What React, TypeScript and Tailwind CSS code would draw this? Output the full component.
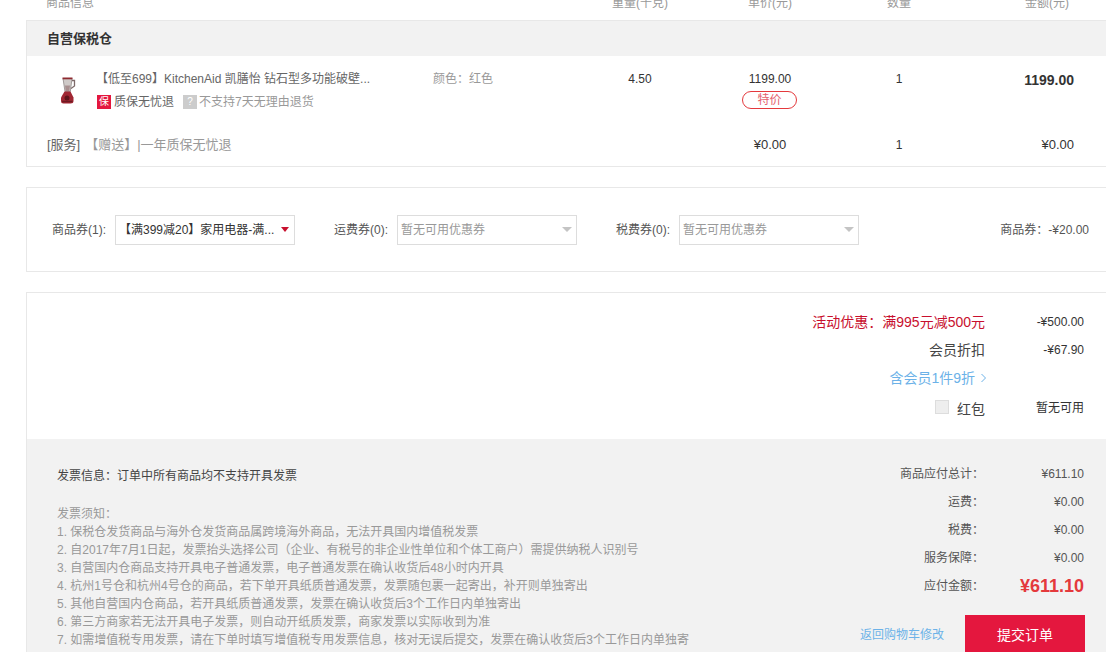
const notes = [
	"1. 保税仓发货商品与海外仓发货商品属跨境海外商品，无法开具国内增值税发票",
	"2. 自2017年7月1日起，发票抬头选择公司（企业、有税号的非企业性单位和个体工商户）需提供纳税人识别号",
	"3. 自营国内仓商品支持开具电子普通发票，电子普通发票在确认收货后48小时内开具",
	"4. 杭州1号仓和杭州4号仓的商品，若下单开具纸质普通发票，发票随包裹一起寄出，补开则单独寄出",
	"5. 其他自营国内仓商品，若开具纸质普通发票，发票在确认收货后3个工作日内单独寄出",
	"6. 第三方商家若无法开具电子发票，则自动开纸质发票，商家发票以实际收到为准",
	"7. 如需增值税专用发票，请在下单时填写增值税专用发票信息，核对无误后提交，发票在确认收货后3个工作日内单独寄",
];

const totals = [
	{ label: "商品应付总计：", value: "¥611.10" },
	{ label: "运费：", value: "¥0.00" },
	{ label: "税费：", value: "¥0.00" },
	{ label: "服务保障：", value: "¥0.00" },
];

function Blender() {
	return (
		<svg width="16" height="28" viewBox="0 0 16 28" className="block">
			<path d="M3 1.500h9l-1.700 13h-5.300z" fill="#cfcac8" stroke="#8f8886" strokeWidth="0.8" />
			<path d="M2.500 0.500h10v1.800h-10z" fill="#8e2a30" />
			<path d="M12 3.500h2.500v5.500l-3.500 2.500" fill="none" stroke="#7d6a6a" strokeWidth="1.300" />
			<path d="M5 8.500h5l-0.700 6h-3.600z" fill="#a88f8f" />
			<path d="M4.500 14.500h6l3 6v3.500q0 2.500-3 2.500h-7q-2.500 0-2.500-2.500v-3.500z" fill="#a12733" />
			<circle cx="7" cy="21" r="2.500" fill="#5f161c" />
			<path d="M2 24.500h10.500" stroke="#6e1a22" strokeWidth="1.500" />
		</svg>
	);
}

function CouponSelect({ text, active }: { text: string; active?: boolean }) {
	return (
		<div className="flex h-[30px] w-[180px] items-center justify-between border border-[#dddddd] pl-[3px] pr-[4px]">
			<span className={active ? "text-[#333333]" : "text-[#999999]"}>{text}</span>
			<span
				className={
					active
						? "mr-px h-0 w-0 border-x-[4.500px] border-t-[5px] border-x-transparent border-t-[#c8102e]"
						: "h-0 w-0 border-x-[5px] border-t-[5px] border-x-transparent border-t-[#c4c4c4]"
				}
			/>
		</div>
	);
}

function Coupon({ label, text, active }: { label: string; text: string; active?: boolean }) {
	return (
		<div className="flex items-center gap-[9px]">
			<span className="w-[54px] whitespace-nowrap text-[#555555]">{label}</span>
			<CouponSelect text={text} active={active} />
		</div>
	);
}

function DiscountRow({
	label,
	value,
	className,
}: {
	label: React.ReactNode;
	value?: string;
	className?: string;
}) {
	return (
		<div className="flex h-7 items-center justify-end pr-[22px]">
			<div className={`text-sm ${className ?? "text-[#444444]"}`}>{label}</div>
			<div className="w-[99px] text-right text-[#333333]">{value}</div>
		</div>
	);
}

export default function App() {
	return (
		<div className="h-[652px] w-[1106px] overflow-hidden bg-white pl-[26px] text-xs [font-family:'Liberation_Sans','Noto_Sans_CJK_SC',sans-serif]">
			<div className="flex h-5 text-[#999999] leading-[7px]">
				<div className="w-[544px] pl-5">商品信息</div>
				<div className="w-[140px] text-center">重量(千克)</div>
				<div className="w-[120px] text-center">单价(元)</div>
				<div className="w-[138px] text-center">数量</div>
				<div className="w-[101px] text-right">金额(元)</div>
			</div>

			<div className="border-y border-l border-[#e8e8e8]">
				<div className="flex h-[35px] items-center bg-[#f2f2f2] pl-5 text-[13px] font-bold text-[#333333]">自营保税仓</div>
				<div className="flex h-[72px] pt-[14px] leading-[18px]">
					<div className="w-[69px] pl-[33px] pt-[7px]">
						<Blender />
					</div>
					<div className="w-[337px]">
						<div className="text-[#666666]">【低至699】KitchenAid 凯膳怡 钻石型多功能破壁...</div>
						<div className="mt-[5px] flex items-center text-[#666666]">
							<span className="ml-px flex h-[14px] w-[14px] items-center justify-center bg-[#e4173e] text-[10px] text-white">保</span>
							<span className="ml-[3px]">质保无忧退</span>
							<span className="ml-[9px] flex h-[14px] w-[14px] items-center justify-center bg-[#cccccc] text-[10px] text-white">?</span>
							<span className="ml-[2px] text-[#999999]">不支持7天无理由退货</span>
						</div>
					</div>
					<div className="w-[137px] text-[#999999]">颜色：红色</div>
					<div className="w-[140px] text-center text-[#333333]">4.50</div>
					<div className="flex w-[120px] flex-col items-center text-[#333333]">
						<span>1199.00</span>
						<span className="ml-[-1px] mt-[3px] flex h-[18px] w-[55px] items-center justify-center rounded-full border border-[#e4393c] text-[#e4606d]">特价</span>
					</div>
					<div className="w-[138px] text-center text-[#333333]">1</div>
					<div className="w-[106px] text-right text-sm font-bold text-[#333333]">1199.00</div>
				</div>
				<div className="flex h-[38px] items-start pt-2 leading-[18px]">
					<div className="w-[543px] pl-5 text-[13px] text-[#666666]">
						[服务]
						<span className="ml-[5px] text-[#999999]">【赠送】|一年质保无忧退</span>
					</div>
					<div className="w-[140px]" />
					<div className="w-[120px] text-center text-[13px] text-[#333333]">¥0.00</div>
					<div className="w-[138px] text-center text-[#333333]">1</div>
					<div className="w-[106px] text-right text-[13px] text-[#333333]">¥0.00</div>
				</div>
			</div>

			<div className="mt-5 flex h-[85px] items-center gap-[39px] border-y border-l border-[#e8e8e8] pl-[25px] pr-[17px]">
				<Coupon label="商品券(1):" text="【满399减20】家用电器-满..." active />
				<Coupon label="运费券(0):" text="暂无可用优惠券" />
				<Coupon label="税费券(0):" text="暂无可用优惠券" />
				<div className="ml-auto text-[#555555]">商品券：-¥20.00</div>
			</div>

			<div className="mt-5 border-t border-l border-[#e8e8e8]">
				<div className="pb-[17px] pt-[15px]">
					<DiscountRow label="活动优惠：满995元减500元" value="-¥500.00" className="text-[#c8102e]" />
					<DiscountRow label="会员折扣" value="-¥67.90" />
					<DiscountRow
						label={
							<span className="mr-[-2px] flex items-center gap-[5px]">
								含会员1件9折
								<svg width="7" height="10" viewBox="0 0 7 10" fill="none" stroke="#6cb2e8" strokeWidth="1">
									<path d="M1.500 1l4 4-4 4" />
								</svg>
							</span>
						}
						className="text-[#6cb2e8]"
					/>
					<div className="mt-[2px]">
						<DiscountRow
							label={
								<span className="flex items-center">
									<span className="mb-[3px] mr-2 h-[14px] w-[14px] border border-[#dddddd] bg-[#eeeeee]" />
									<span className="mt-[2px]">红包</span>
								</span>
							}
							value="暂无可用"
						/>
					</div>
				</div>

				<div className="flex h-[220px] justify-between bg-[#f2f2f2]">
					<div className="pl-[30px] pt-[28px] leading-[18px]">
						<div className="text-[#444444]">发票信息：订单中所有商品均不支持开具发票</div>
						<div className="mt-5 text-[#999999]">
							<div>发票须知：</div>
							{notes.map((note) => (
								<div key={note}>{note}</div>
							))}
						</div>
					</div>

					<div className="w-[240px] pt-[21px]">
						{totals.map((row) => (
							<div key={row.label} className="flex h-7 items-center justify-end pr-[22px]">
								<span className="text-[#555555]">{row.label}</span>
								<span className="w-[100px] text-right text-[#555555]">{row.value}</span>
							</div>
						))}
						<div className="flex h-7 items-center justify-end pr-[22px]">
							<span className="text-[#555555]">应付金额：</span>
							<span className="w-[100px] text-right text-lg font-bold text-[#e4393c]">¥611.10</span>
						</div>
						<div className="ml-[-31px] mt-[15px] flex items-center justify-end gap-[21px] pr-[21px]">
							<span className="text-[#6cb2e8]">返回购物车修改</span>
							<button className="h-10 w-[120px] bg-[#e4173e] text-sm text-white">提交订单</button>
						</div>
					</div>
				</div>
			</div>
		</div>
	);
}
